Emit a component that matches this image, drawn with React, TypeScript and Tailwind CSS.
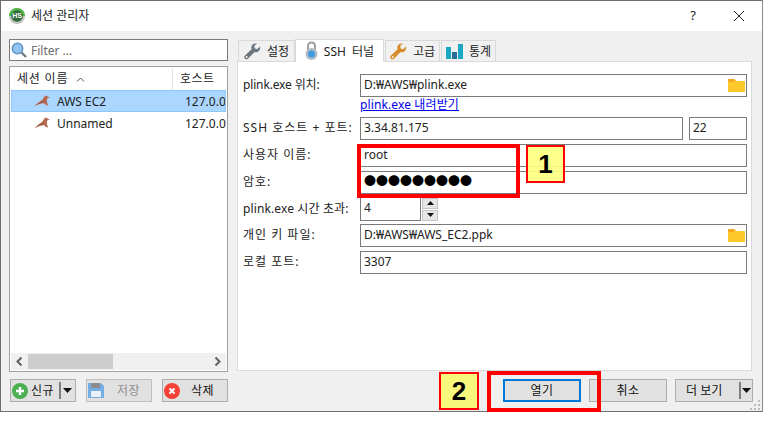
import React from "react";

const font = { fontFamily: '"Noto Sans","Noto Sans CJK KR",sans-serif' };
const digitFont = { fontFamily: '"Liberation Sans",sans-serif' };

function Dolphin() {
  return (
    <svg width="16" height="12" viewBox="0 0 16 12" className="shrink-0">
      <path d="M0 11.5 L3 8.8 C5 6.8 7 6 8.5 4.6 C9.5 2.6 10.5 1 12 0.5 L13.5 1.5 L15.8 2.6 L13.2 3.6 C12.6 5.6 12.8 7.5 14.2 10.8 L11 9.6 L10.4 8.2 C8 8 5 8.8 0 11.5 Z" fill="#b56a50" />
      <path d="M3.5 9 C6 7.4 8 7.2 10 6.6" stroke="#8a4c39" strokeWidth="0.7" fill="none" />
    </svg>
  );
}

function Wrench({ color }: { color: string }) {
  return (
    <svg width="17" height="17" viewBox="0 0 17 17" className="shrink-0">
      <path d="M16 3.4 L13.2 6.2 L10.8 5.5 L10.2 3.1 L13 0.6 C10.5 -0.1 8 1.2 7.4 3.6 C7.2 4.6 7.3 5.5 7.6 6.2 L1 12.6 C0.1 13.5 0.1 14.8 1 15.7 C1.9 16.6 3.2 16.5 4 15.7 L10.5 9 C11.4 9.4 12.5 9.4 13.5 9 C15.6 8.2 16.6 5.8 16 3.4 Z" fill={color} />
      <circle cx="2.7" cy="14" r="0.9" fill="#fff" />
    </svg>
  );
}

function Lock() {
  return (
    <svg width="13" height="20" viewBox="0 0 13 20" className="shrink-0">
      <path d="M3 9 V5.5 C3 3 4.5 1.5 6.5 1.5 C8.5 1.5 10 3 10 5.5 V9" stroke="#a0a0a0" strokeWidth="2" fill="none" />
      <circle cx="6.5" cy="13" r="6" fill="#b4bcc3" />
      <circle cx="6.5" cy="13" r="3.5" fill="#3d9be0" />
    </svg>
  );
}

function Bars() {
  return (
    <svg width="17" height="15" viewBox="0 0 17 15" className="shrink-0">
      <rect x="0" y="3" width="5" height="12" fill="#1aa7c4" />
      <rect x="6" y="8" width="5" height="7" fill="#2b6f96" />
      <rect x="12" y="0" width="5" height="15" fill="#1aa7c4" />
    </svg>
  );
}

function Folder() {
  return (
    <svg width="17" height="13" viewBox="0 0 17 13" className="shrink-0">
      <path d="M0 1 C0 0.4 0.4 0 1 0 H6 L8 2 H16 C16.6 2 17 2.4 17 3 V12 C17 12.6 16.6 13 16 13 H1 C0.4 13 0 12.6 0 12 Z" fill="#fdc829" />
      <path d="M0 1 C0 0.4 0.4 0 1 0 H6 L8 2 H6 L5 3 H0 Z" fill="#f5a623" />
    </svg>
  );
}

function Field({ value, className = "", folder = false }: { value: string; className?: string; folder?: boolean }) {
  return (
    <div className={`h-[23px] bg-white border border-[#7a7a7a] flex items-center pl-[3px] pr-[1px] text-[12px] text-[#222] ${className}`}>
      <span className="flex-1 whitespace-nowrap overflow-hidden pb-[2px]">{value}</span>
      {folder && <Folder />}
    </div>
  );
}

function Label({ children, className = "tracking-[1px]" }: { children: React.ReactNode; className?: string }) {
  return <div className={`w-[117px] shrink-0 text-[12px] text-[#222] whitespace-nowrap pb-[1px] ${className}`}>{children}</div>;
}

function Tab({ icon, label, active = false, className = "" }: { icon: React.ReactNode; label: string; active?: boolean; className?: string }) {
  return (
    <div
      className={`flex items-center justify-center gap-[6px] text-[12px] text-[#222] border border-[#d9d9d9] border-b-0 ${
        active ? "h-[23px] bg-white -mb-px relative z-10" : "h-[21px] bg-[#f0f0f0]"
      } ${className}`}
    >
      {icon}
      <span className="whitespace-nowrap pt-[1px]">{label}</span>
    </div>
  );
}

function BarButton({ children, className = "" }: { children: React.ReactNode; className?: string }) {
  return (
    <div className={`h-[23px] w-[66px] bg-[#e1e1e1] border border-[#adadad] flex items-center text-[12px] text-[#111] tracking-[0.5px] ${className}`}>
      {children}
    </div>
  );
}

export default function App() {
  return (
    <div className="relative w-[763px] h-[424px] bg-white overflow-hidden" style={font}>
      <div className="w-[763px] h-[412px] border border-[#6e6e6e] border-r-[#8a8a8a] bg-[#f0f0f0] flex flex-col">
        <div className="h-[30px] bg-white flex items-center shrink-0">
          <svg width="16" height="16" viewBox="0 0 16 16" className="ml-[8px] shrink-0">
            <circle cx="8" cy="8" r="8" fill="#bfc4bf" />
            <path d="M0 8 A8 8 0 0 1 16 8 Z" fill="#4fb548" />
            <circle cx="8" cy="8" r="5.8" fill="#2f6b3a" />
            <text x="8" y="10.4" textAnchor="middle" fontSize="7" fontWeight="700" fill="#fff" style={digitFont}>HS</text>
          </svg>
          <span className="ml-[6px] text-[12px] text-[#222]">세션 관리자</span>
          <span className="ml-auto text-[13px] text-[#222] mr-[37px]">?</span>
          <svg width="12" height="12" viewBox="0 0 12 12" className="mr-[17px]">
            <path d="M1 1 L11 11 M11 1 L1 11" stroke="#222" strokeWidth="1" />
          </svg>
        </div>

        <div className="flex-1 flex pl-[8px] pt-[8px] pb-[8px] min-h-0">
          {/* left column */}
          <div className="w-[219px] shrink-0 flex flex-col">
            <div className="h-[22px] bg-white border border-[#7a7a7a] flex items-center pl-[1px] shrink-0">
              <svg width="16" height="16" viewBox="0 0 16 16" className="shrink-0">
                <circle cx="6.5" cy="6.5" r="5.2" fill="#8fc5f0" stroke="#5d93c4" strokeWidth="1.5" />
                <path d="M10.5 10.5 L15 15" stroke="#6f7d88" strokeWidth="2.4" />
              </svg>
              <span className="ml-[4px] text-[12px] text-[#6d6d6d] pt-[1px]">Filter ...</span>
            </div>
            <div className="mt-[5px] h-[306px] bg-white border border-[#a0a0a0] p-[1px] flex flex-col shrink-0">
              <div className="h-[22px] flex text-[12px] text-[#222] shrink-0">
                <div className="w-[162px] border-r border-[#e3e3e3] flex items-center pl-[6px] tracking-[0.8px]">
                  세션 이름
                  <svg width="9" height="5" viewBox="0 0 9 5" className="ml-[8px]">
                    <path d="M1 4.5 L4.5 1 L8 4.5" stroke="#555" fill="none" />
                  </svg>
                </div>
                <div className="flex-1 flex items-center pl-[7px] tracking-[0.5px]">호스트</div>
              </div>
              <div className="h-[22px] bg-[#aad6ff] border border-[#8cc6fb] flex items-center text-[12px] text-[#222] shrink-0 overflow-hidden">
                <span className="ml-[22px]"><Dolphin /></span>
                <span className="ml-[7px] w-[128px] shrink-0 pt-[1px]">AWS EC2</span>
                <span className="whitespace-nowrap pt-[1px]">127.0.0.</span>
              </div>
              <div className="h-[22px] flex items-center text-[12px] text-[#222] shrink-0 overflow-hidden pl-[1px]">
                <span className="ml-[22px]"><Dolphin /></span>
                <span className="ml-[7px] w-[128px] shrink-0 pt-[2px]">Unnamed</span>
                <span className="whitespace-nowrap pt-[2px]">127.0.0.</span>
              </div>
              <div className="flex-1" />
              <div className="h-[17px] bg-[#f0f0f0] flex items-center shrink-0">
                <svg width="17" height="17" viewBox="0 0 17 17" className="shrink-0">
                  <path d="M10.5 4.5 L6.5 8.5 L10.5 12.5" stroke="#606060" strokeWidth="2" fill="none" />
                </svg>
                <div className="w-[85px] h-[15px] bg-[#cdcdcd]" />
                <svg width="17" height="17" viewBox="0 0 17 17" className="shrink-0 ml-auto">
                  <path d="M6.5 4.5 L10.5 8.5 L6.5 12.5" stroke="#606060" strokeWidth="2" fill="none" />
                </svg>
              </div>
            </div>
            <div className="mt-[7px] flex gap-[10px] pl-[1px]">
              <BarButton>
                <svg width="16" height="16" viewBox="0 0 16 16" className="ml-[1px] shrink-0">
                  <circle cx="8" cy="8" r="8" fill="#4caf50" />
                  <path d="M8 4 V12 M4 8 H12" stroke="#fff" strokeWidth="2.4" />
                </svg>
                <span className="ml-[3px] pt-[1px]">신규</span>
                <span className="ml-[5px] h-[17px] border-l-2 border-[#7d7d7d]" />
                <svg width="9" height="5" viewBox="0 0 9 5" className="ml-[2px]"><path d="M0 0 H9 L4.5 5 Z" fill="#111" /></svg>
              </BarButton>
              <BarButton className="bg-[#cccccc] border-[#bfbfbf]">
                <svg width="17" height="17" viewBox="0 0 17 17" className="shrink-0 ml-[1px]">
                  <path d="M0 1 H13 L16 4 V16 H0 Z" fill="#74aee2" />
                  <rect x="3" y="1" width="9" height="5" fill="#8d8d8d" />
                  <rect x="3" y="9" width="10" height="6" fill="#e8f0f8" />
                </svg>
                <span className="ml-[12px] text-[#8e8e8e] pt-[1px]">저장</span>
              </BarButton>
              <BarButton>
                <svg width="16" height="16" viewBox="0 0 16 16" className="ml-[1px] shrink-0">
                  <circle cx="8" cy="8" r="8" fill="#f44336" />
                  <path d="M5.5 5.5 L10.5 10.5 M10.5 5.5 L5.5 10.5" stroke="#fff" strokeWidth="2" />
                </svg>
                <span className="ml-[11px] pt-[1px]">삭제</span>
              </BarButton>
            </div>
          </div>

          {/* right column */}
          <div className="ml-[9px] w-[515px] shrink-0 flex flex-col">
            <div className="h-[22px] flex items-end pl-[1px] shrink-0">
              <Tab icon={<Wrench color="#6b7680" />} label="설정" className="w-[57px]" />
              <Tab icon={<Lock />} label="SSH 터널" active className="w-[89px] [word-spacing:3px]" />
              <Tab icon={<Wrench color="#d98a2b" />} label="고급" className="w-[55px] ml-[1px]" />
              <Tab icon={<Bars />} label="통계" className="w-[55px] ml-[1px]" />
            </div>
            <div className="h-[310px] bg-white border border-[#d9d9d9] pl-[5px] pr-[4px] pt-[12px] flex flex-col shrink-0">
              <div className="flex items-center">
                <Label className="tracking-[-0.15px]">plink.exe 위치:</Label>
                <Field value="D:₩AWS₩plink.exe" className="flex-1" folder />
              </div>
              <div className="pl-[117px] h-[20px] text-[12px] leading-[16px] tracking-[0.12px]">
                <span className="text-[#0000ee] underline">plink.exe 내려받기</span>
              </div>
              <div className="flex items-center">
                <Label>SSH 호스트 + 포트:</Label>
                <Field value="3.34.81.175" className="flex-1" />
                <Field value="22" className="w-[58px] ml-[6px]" />
              </div>
              <div className="flex items-center mt-[4px]">
                <Label>사용자 이름:</Label>
                <Field value="root" className="flex-1" />
              </div>
              <div className="flex items-center mt-[4px]">
                <Label>암호:</Label>
                <Field value="●●●●●●●●●" className="flex-1 !text-black" />
              </div>
              <div className="flex items-center mt-[3px]">
                <Label className="tracking-[0.12px]">plink.exe 시간 초과:</Label>
                <Field value="4" className="w-[61px] h-[24px]" />
                <div className="ml-[1px] flex flex-col gap-[1px] w-[16px]">
                  <div className="h-[11px] bg-[#e6e6e6] border border-[#c4c4c4] flex items-center justify-center">
                    <svg width="7" height="4" viewBox="0 0 7 4"><path d="M0 4 L3.5 0 L7 4 Z" fill="#111" /></svg>
                  </div>
                  <div className="h-[11px] bg-[#e6e6e6] border border-[#c4c4c4] flex items-center justify-center">
                    <svg width="7" height="4" viewBox="0 0 7 4"><path d="M0 0 H7 L3.5 4 Z" fill="#111" /></svg>
                  </div>
                </div>
              </div>
              <div className="flex items-center mt-[3px]">
                <Label>개인 키 파일:</Label>
                <Field value="D:₩AWS₩AWS_EC2.ppk" className="flex-1" folder />
              </div>
              <div className="flex items-center mt-[4px]">
                <Label>로컬 포트:</Label>
                <Field value="3307" className="flex-1" />
              </div>
            </div>
            <div className="mt-[8px] flex justify-end gap-[8px] -mr-[1px]">
              <BarButton className="w-[78px] justify-center !border-2 !border-[#0078d7]"><span className="pt-[1px]">열기</span></BarButton>
              <BarButton className="w-[78px] justify-center"><span className="pt-[1px]">취소</span></BarButton>
              <BarButton className="w-[78px] !tracking-normal">
                <span className="ml-[10px] whitespace-nowrap pt-[1px]">더 보기</span>
                <span className="ml-auto h-[17px] border-l-2 border-[#7d7d7d]" />
                <svg width="9" height="5" viewBox="0 0 9 5" className="ml-[1px] mr-[1px]"><path d="M0 0 H9 L4.5 5 Z" fill="#111" /></svg>
              </BarButton>
            </div>
          </div>
        </div>
      </div>

      {/* resize grip */}
      <svg width="12" height="12" viewBox="0 0 12 12" className="absolute left-[749px] top-[399px]">
        <path d="M9 1h2v2H9z M5 5h2v2H5z M9 5h2v2H9z M1 9h2v2H1z M5 9h2v2H5z M9 9h2v2H9z" fill="#bdbdbd" />
      </svg>

      {/* annotations over the screenshot */}
      <div className="absolute left-[357px] top-[144px] w-[163px] h-[54px] border-[4px] border-[#ff0000]" />
      <div className="absolute left-[526px] top-[145px] w-[39px] h-[38px] border-[2px] border-[#ff0000] bg-[#ffff80]/90 flex items-center justify-center text-[26px] font-bold text-black" style={digitFont}>
        1
      </div>
      <div className="absolute left-[439px] top-[372px] w-[40px] h-[38px] border-[2px] border-[#ff0000] bg-[#f7f77c] flex items-center justify-center text-[26px] font-bold text-black" style={digitFont}>
        2
      </div>
      <div className="absolute left-[487px] top-[371px] w-[114px] h-[41px] border-[4px] border-[#ff0000]" />
    </div>
  );
}
